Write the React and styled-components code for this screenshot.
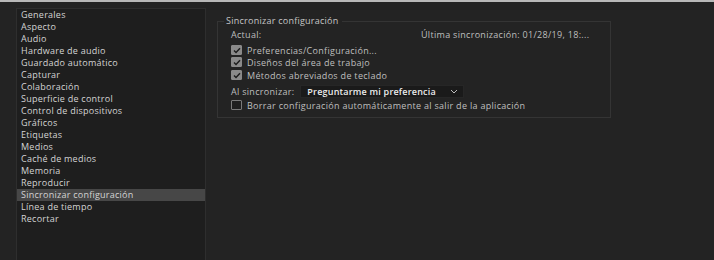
import React from "react";
import styled, { createGlobalStyle } from "styled-components";

const Global = createGlobalStyle`
  html, body { margin: 0; padding: 0; background: #232323; overflow: hidden; }
  body { font-family: "Open Sans", "Noto Sans", sans-serif; }
`;

const Frame = styled.div`
  border-top: 2px solid #b8b8b8;
  height: 260px;
  display: flex;
  align-items: flex-start;
  gap: 11px;
  padding: 6px 0 0 16px;
  box-sizing: border-box;
  background: #232323;
  overflow: hidden;
`;

const Sidebar = styled.ul`
  list-style: none;
  margin: 0;
  padding: 0;
  width: 190px;
  align-self: stretch;
  box-sizing: border-box;
  background: #1e1e1e;
  border: 1px solid #2e2e2e;
  border-bottom: none;
  flex: none;
`;

const Item = styled.li`
  height: 12px;
  line-height: 12px;
  padding-left: 4px;
  font-size: 9px;
  letter-spacing: 0.25px;
  color: #d4d4d4;
  background: ${(p) => (p.$active ? "#474747" : "transparent")};
  white-space: nowrap;
`;

const Group = styled.fieldset`
  margin: 7px 0 0;
  padding: 0 0 0 13px;
  width: 394px;
  height: 103px;
  box-sizing: border-box;
  border: 1px solid #343434;
  min-width: 0;
`;

const Legend = styled.legend`
  margin-left: -7px;
  padding: 0 3px 0 2px;
  font-size: 9px;
  letter-spacing: 0.25px;
  line-height: 12px;
  color: #c6c6c6;
`;

const Row = styled.div`
  display: flex;
  align-items: center;
  height: ${(p) => p.$h || 12}px;
  margin-top: ${(p) => p.$mt || 0}px;
  font-size: 9px;
  letter-spacing: 0.3px;
  color: #bfbfbf;
  white-space: nowrap;
`;

const Label = styled.span`
  width: ${(p) => (p.$w ? `${p.$w}px` : "auto")};
  flex: none;
`;

const Box = styled.span`
  width: 11px;
  height: 10px;
  box-sizing: border-box;
  margin-right: 5px;
  flex: none;
  display: inline-flex;
  align-items: center;
  justify-content: center;
  border-radius: 1px;
  background: ${(p) => (p.$checked ? "#8a8a8a" : "#1f1f1f")};
  border: 1px solid ${(p) => (p.$checked ? "#8a8a8a" : "#7a7a7a")};
`;

const Select = styled.div`
  margin-left: 6px;
  width: 164px;
  height: 13px;
  box-sizing: border-box;
  background: #1a1a1a;
  border: 1px solid #262626;
  display: flex;
  align-items: center;
  justify-content: space-between;
  padding: 0 5px 0 6px;
  color: #ececec;
  font-weight: 600;
  letter-spacing: 0.2px;
`;

const Check = () => (
  <svg width="8" height="7" viewBox="0 0 8 7">
    <path d="M1 3.6 L3 5.5 L7 1.2" fill="none" stroke="#1c1c1c" strokeWidth="1.4" />
  </svg>
);

const Chevron = () => (
  <svg width="8" height="5" viewBox="0 0 8 5">
    <path d="M1 1 L4 4 L7 1" fill="none" stroke="#bdbdbd" strokeWidth="1" />
  </svg>
);

const items = [
  "Generales",
  "Aspecto",
  "Audio",
  "Hardware de audio",
  "Guardado automático",
  "Capturar",
  "Colaboración",
  "Superficie de control",
  "Control de dispositivos",
  "Gráficos",
  "Etiquetas",
  "Medios",
  "Caché de medios",
  "Memoria",
  "Reproducir",
  "Sincronizar configuración",
  "Línea de tiempo",
  "Recortar",
];

export default function App() {
  return (
    <>
      <Global />
      <Frame>
        <Sidebar>
          {items.map((t) => (
            <Item key={t} $active={t === "Sincronizar configuración"}>
              {t}
            </Item>
          ))}
        </Sidebar>
        <Group>
          <Legend>Sincronizar configuración</Legend>
          <Row $mt={1}>
            <Label $w={190}>Actual:</Label>
            <span>Última sincronización: 01/28/19, 18:...</span>
          </Row>
          <Row $mt={4}>
            <Box $checked><Check /></Box>
            Preferencias/Configuración...
          </Row>
          <Row>
            <Box $checked><Check /></Box>
            Diseños del área de trabajo
          </Row>
          <Row $mt={1}>
            <Box $checked><Check /></Box>
            Métodos abreviados de teclado
          </Row>
          <Row $mt={3} $h={14}>
            <Label>Al sincronizar:</Label>
            <Select>
              <span>Preguntarme mi preferencia</span>
              <Chevron />
            </Select>
          </Row>
          <Row $mt={1}>
            <Box />
            Borrar configuración automáticamente al salir de la aplicación
          </Row>
        </Group>
      </Frame>
    </>
  );
}
